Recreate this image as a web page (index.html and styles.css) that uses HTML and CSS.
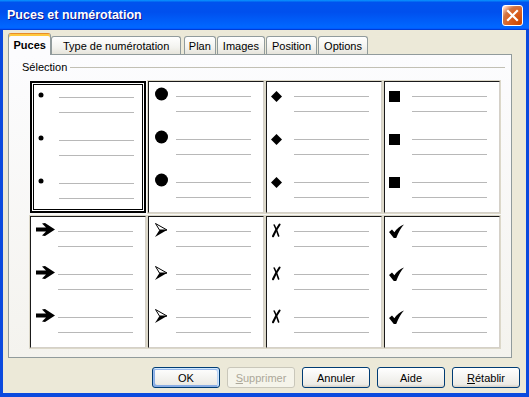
FILE: index.html
```html
<!DOCTYPE html>
<html lang="fr">
  <head>
    <meta charset="UTF-8" />
    <title>Puces et numérotation</title>
    <link rel="stylesheet" href="styles.css">
  </head>
  <body>
    <svg class="defs" xmlns="http://www.w3.org/2000/svg">
      <symbol id="dot" viewBox="0 0 23 20"><circle cx="5" cy="8" r="2.5" /></symbol>
      <symbol id="circle" viewBox="0 0 23 20"><circle cx="8.5" cy="8" r="6.5" /></symbol>
      <symbol id="diamond" viewBox="0 0 23 20"><polygon points="5.5,5 11,10.5 5.5,16 0,10.5" /></symbol>
      <symbol id="square" viewBox="0 0 23 20"><rect x="0" y="5" width="11" height="11" /></symbol>
      <symbol id="arrow" viewBox="0 0 23 20"><polygon points="1,6.5 11,6.5 7,2.6 10,2 20,8.5 10,15 7,14.4 11,10.5 1,10.5" /></symbol>
      <symbol id="head" viewBox="0 0 23 20">
        <polygon points="2.5,2.5 14,9 6.5,9" fill="#fff" stroke="#000" stroke-width="1" stroke-linejoin="round" />
        <polygon points="6.5,9 14,9 2,16" />
      </symbol>
      <symbol id="cross" viewBox="0 0 23 20">
        <path d="M3.2 4 Q5.8 9 7.6 15" fill="none" stroke="#000" stroke-width="1.6" stroke-linecap="round" />
        <path d="M8.6 3.5 Q4.8 9 2 15.2" fill="none" stroke="#000" stroke-width="2.1" stroke-linecap="round" />
      </symbol>
      <symbol id="check" viewBox="0 0 23 20"><path d="M0 11 L3 8.5 L5.4 11.2 Q9.2 5.6 15 3.5 Q11 7.6 7.2 17 L4.8 17 Z" /></symbol>
    </svg>

    <div class="window">
      <div class="titlebar">
        <span class="title">Puces et numérotation</span>
        <div class="close">
          <svg width="19" height="19" viewBox="0 0 19 19">
            <path d="M5 5 L14 14 M14 5 L5 14" stroke="#fff" stroke-width="2.2" stroke-linecap="square" />
          </svg>
        </div>
      </div>

      <div class="body">
        <div class="tabs">
          <div class="tab active">Puces</div>
          <div class="tab wide">Type de numérotation</div>
          <div class="tab narrow">Plan</div>
          <div class="tab">Images</div>
          <div class="tab">Position</div>
          <div class="tab">Options</div>
        </div>

        <div class="panel">
          <div class="group-title"><span>Sélection</span><i></i></div>

          <div class="grid">
            <div class="cell selected">
              <div class="item"><svg class="mark"><use href="#dot" /></svg><div class="lines"><i></i><i></i></div></div>
              <div class="item"><svg class="mark"><use href="#dot" /></svg><div class="lines"><i></i><i></i></div></div>
              <div class="item"><svg class="mark"><use href="#dot" /></svg><div class="lines"><i></i><i></i></div></div>
            </div>
            <div class="cell">
              <div class="item"><svg class="mark"><use href="#circle" /></svg><div class="lines"><i></i><i></i></div></div>
              <div class="item"><svg class="mark"><use href="#circle" /></svg><div class="lines"><i></i><i></i></div></div>
              <div class="item"><svg class="mark"><use href="#circle" /></svg><div class="lines"><i></i><i></i></div></div>
            </div>
            <div class="cell">
              <div class="item"><svg class="mark"><use href="#diamond" /></svg><div class="lines"><i></i><i></i></div></div>
              <div class="item"><svg class="mark"><use href="#diamond" /></svg><div class="lines"><i></i><i></i></div></div>
              <div class="item"><svg class="mark"><use href="#diamond" /></svg><div class="lines"><i></i><i></i></div></div>
            </div>
            <div class="cell">
              <div class="item"><svg class="mark"><use href="#square" /></svg><div class="lines"><i></i><i></i></div></div>
              <div class="item"><svg class="mark"><use href="#square" /></svg><div class="lines"><i></i><i></i></div></div>
              <div class="item"><svg class="mark"><use href="#square" /></svg><div class="lines"><i></i><i></i></div></div>
            </div>
            <div class="cell">
              <div class="item"><svg class="mark"><use href="#arrow" /></svg><div class="lines"><i></i><i></i></div></div>
              <div class="item"><svg class="mark"><use href="#arrow" /></svg><div class="lines"><i></i><i></i></div></div>
              <div class="item"><svg class="mark"><use href="#arrow" /></svg><div class="lines"><i></i><i></i></div></div>
            </div>
            <div class="cell">
              <div class="item"><svg class="mark"><use href="#head" /></svg><div class="lines"><i></i><i></i></div></div>
              <div class="item"><svg class="mark"><use href="#head" /></svg><div class="lines"><i></i><i></i></div></div>
              <div class="item"><svg class="mark"><use href="#head" /></svg><div class="lines"><i></i><i></i></div></div>
            </div>
            <div class="cell">
              <div class="item"><svg class="mark"><use href="#cross" /></svg><div class="lines"><i></i><i></i></div></div>
              <div class="item"><svg class="mark"><use href="#cross" /></svg><div class="lines"><i></i><i></i></div></div>
              <div class="item"><svg class="mark"><use href="#cross" /></svg><div class="lines"><i></i><i></i></div></div>
            </div>
            <div class="cell">
              <div class="item"><svg class="mark"><use href="#check" /></svg><div class="lines"><i></i><i></i></div></div>
              <div class="item"><svg class="mark"><use href="#check" /></svg><div class="lines"><i></i><i></i></div></div>
              <div class="item"><svg class="mark"><use href="#check" /></svg><div class="lines"><i></i><i></i></div></div>
            </div>
          </div>
        </div>

        <div class="buttons">
          <button class="default">OK</button>
          <button disabled><u>S</u>upprimer</button>
          <button>Annuler</button>
          <button>Aide</button>
          <button><u>R</u>établir</button>
        </div>
      </div>
    </div>
  </body>
</html>
```

FILE: styles.css
```css
body {
  margin: 0;
  font-family: "Liberation Sans", Arial, sans-serif;
  font-size: 11px;
  color: #000;
}
.defs {
  position: absolute;
  width: 0;
  height: 0;
}
.window {
  width: 529px;
  height: 397px;
  display: flex;
  flex-direction: column;
  background: #ece9d8;
}
.titlebar {
  height: 30px;
  flex: none;
  display: flex;
  align-items: center;
  justify-content: space-between;
  padding: 0 6px 0 7px;
  background: linear-gradient(180deg, #0997ff, #0053ee 8%, #0050ee 40%, #06f 88%, #06f 93%, #005bff 95%, #003dd7 96%, #003dd7);
}
.title {
  color: #fff;
  font-weight: bold;
  font-size: 12.5px;
  text-shadow: 1px 1px #0f1089;
}
.close {
  width: 21px;
  height: 21px;
  box-sizing: border-box;
  border: 1px solid #fff;
  border-radius: 3px;
  display: flex;
  align-items: center;
  justify-content: center;
  background: radial-gradient(circle at 90% 90%, #cc4600 0%, #dc6527 55%, #cd7546 70%, #ffccb2 90%, #fff 100%);
}
.body {
  flex: 1;
  border: solid #0b4ade;
  border-width: 0 3px 4px;
  padding: 3px 6px 0 5px;
}
.tabs {
  display: flex;
  align-items: flex-end;
  gap: 1px;
  height: 21px;
}
.tab {
  height: 18px;
  box-sizing: border-box;
  padding: 3px 5px 0;
  border: 1px solid #919b9c;
  border-bottom: none;
  border-radius: 3px 3px 0 0;
  background: linear-gradient(#fff, #f3f3ef 60%, #e6e4db);
  white-space: nowrap;
}
.tab.wide {
  padding: 3px 10.5px 0;
  margin-right: 2px;
}
.tab.narrow {
  padding: 3px 4px 0;
}
.tab.active {
  height: 22px;
  padding: 5px 4.5px 0;
  margin-bottom: -1px;
  margin-right: -1px;
  position: relative;
  font-weight: bold;
  background: #fcfcfe;
  border-top: 1px solid #e68b2c;
  box-shadow: inset 0 2px #ffc83c;
}
.panel {
  height: 304px;
  box-sizing: border-box;
  margin-right: 8px;
  padding: 7px 6px 0 13px;
  border: 1px solid #919b9c;
  background: linear-gradient(#fcfcfe, #f4f3ee);
}
.group-title {
  height: 11px;
  line-height: 11px;
  display: flex;
  align-items: center;
  gap: 3px;
}
.group-title i {
  flex: 1;
  height: 1px;
  background: #c2c0b4;
}
.grid {
  margin: 8px 0 0 8px;
  display: grid;
  grid-template-columns: repeat(4, 116px);
  grid-template-rows: repeat(2, 132px);
  gap: 3px 2px;
}
.cell {
  box-sizing: border-box;
  padding-top: 14px;
  background: #fff;
  border: 1px solid;
  border-color: #1a1a1a #d4d0c8 #d4d0c8 #1a1a1a;
  box-shadow: 0 0 0 1px #dcd8c9;
}
.cell.selected {
  border: 2px solid #000;
  box-shadow: inset 0 0 0 1px #fff, inset 0 0 0 2px #000;
}
.item {
  height: 43px;
  display: flex;
  align-items: flex-start;
}
.mark {
  width: 23px;
  height: 20px;
  margin: -10px 0 0 4px;
  flex: none;
}
.lines {
  width: 75px;
  display: flex;
  flex-direction: column;
  gap: 14px;
}
.lines i {
  height: 1px;
  background: #b8b8b8;
}
.buttons {
  margin-top: 9px;
  display: flex;
  justify-content: flex-end;
  gap: 7px;
}
button {
  width: 68px;
  height: 21px;
  padding: 0;
  font-family: "Liberation Sans", Arial, sans-serif;
  font-size: 11px;
  font-weight: normal;
  color: #000;
  border: 1px solid #003c74;
  border-radius: 3px;
  background: linear-gradient(#fff, #ecebe6 86%, #d6d0c5);
}
button.default {
  box-shadow: inset -1px 1px #cee7ff, inset 1px 2px #98b8ea, inset -2px 2px #bcd4f6, inset 1px -1px #89ade4, inset 2px -2px #89ade4;
}
button:disabled {
  color: #aca899;
  border-color: #c9c7ba;
  background: #f5f4ea;
}
```
